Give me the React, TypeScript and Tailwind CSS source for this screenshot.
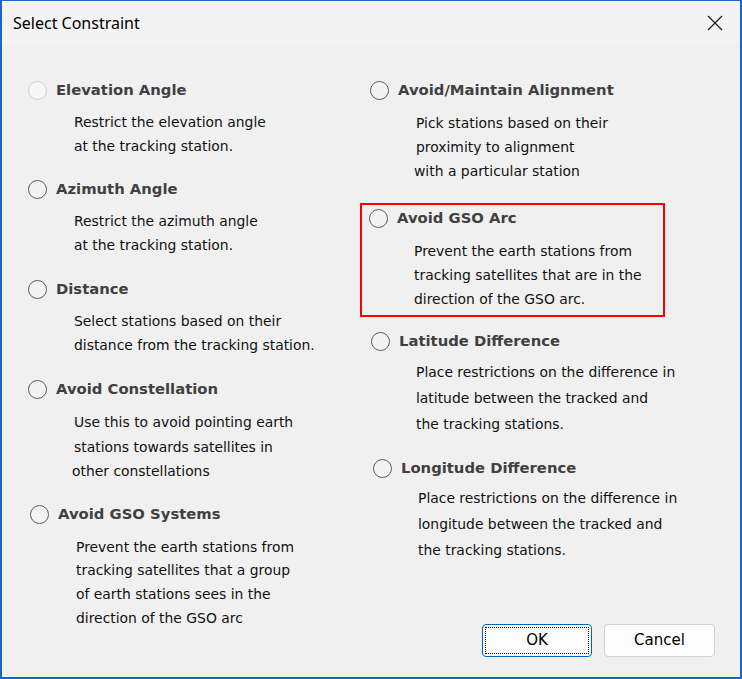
import React from "react";

type Item = {
  label: string;
  lines: { text: string; shift?: string }[];
  wrap: string;
  desc: string;
  disabled?: boolean;
};

const font = { fontFamily: '"DejaVu Sans", Tahoma, sans-serif' };

const leftItems: Item[] = [
  {
    label: "Elevation Angle",
    wrap: "ml-[26px] mt-[36px]",
    desc: "ml-[46px] mt-[10px] leading-[24px]",
    disabled: true,
    lines: [{ text: "Restrict the elevation angle" }, { text: "at the tracking station." }],
  },
  {
    label: "Azimuth Angle",
    wrap: "ml-[26px] mt-[21px]",
    desc: "ml-[46px] mt-[10px] leading-[24px]",
    lines: [{ text: "Restrict the azimuth angle" }, { text: "at the tracking station." }],
  },
  {
    label: "Distance",
    wrap: "ml-[26px] mt-[22px]",
    desc: "ml-[46px] mt-[10px] leading-[24px]",
    lines: [{ text: "Select stations based on their" }, { text: "distance from the tracking station." }],
  },
  {
    label: "Avoid Constellation",
    wrap: "ml-[26px] mt-[22px]",
    desc: "ml-[46px] mt-[11px] leading-[24.5px]",
    lines: [
      { text: "Use this to avoid pointing earth" },
      { text: "stations towards satellites in" },
      { text: "other constellations", shift: "-ml-[2px]" },
    ],
  },
  {
    label: "Avoid GSO Systems",
    wrap: "ml-[28px] mt-[21px]",
    desc: "ml-[46px] mt-[11px] leading-[23.7px]",
    lines: [
      { text: "Prevent the earth stations from" },
      { text: "tracking satellites that a group" },
      { text: "of earth stations sees in the" },
      { text: "direction of the GSO arc" },
    ],
  },
];

function Radio({ disabled }: { disabled?: boolean }) {
  return (
    <span
      className={
        disabled
          ? "w-[19px] h-[19px] shrink-0 rounded-full border border-[#cfcfcf] bg-[#f7f7f7]"
          : "w-[19px] h-[19px] shrink-0 rounded-full border border-[#5c5c5c] bg-[#f3f3f3]"
      }
    />
  );
}

function Option({ item }: { item: Item }) {
  return (
    <div className={item.wrap}>
      <div className="flex items-center h-[20px] gap-[9px]">
        <Radio disabled={item.disabled} />
        <span className="text-[14.8px] font-bold text-[#404040] whitespace-nowrap">{item.label}</span>
      </div>
      <div className={item.desc}>
        {item.lines.map((l, i) => (
          <div key={i} className={`text-[13.9px] text-[#111] whitespace-nowrap ${l.shift ?? ""}`}>
            {l.text}
          </div>
        ))}
      </div>
    </div>
  );
}

export default function App() {
  const alignment: Item = {
    label: "Avoid/Maintain Alignment",
    wrap: "ml-[10px] mt-[36px]",
    desc: "ml-[46px] mt-[11px] leading-[24px]",
    lines: [
      { text: "Pick stations based on their" },
      { text: "proximity to alignment" },
      { text: "with a particular station", shift: "-ml-[2px]" },
    ],
  };
  const gsoArc: Item = {
    label: "Avoid GSO Arc",
    wrap: "ml-[7px] mt-[3px]",
    desc: "ml-[45px] mt-[11px] leading-[24px]",
    lines: [
      { text: "Prevent the earth stations from" },
      { text: "tracking satellites that are in the" },
      { text: "direction of the GSO arc." },
    ],
  };
  const latitude: Item = {
    label: "Latitude Difference",
    wrap: "ml-[11px] mt-[14px]",
    desc: "ml-[45px] mt-[8px] leading-[26px]",
    lines: [
      { text: "Place restrictions on the difference in" },
      { text: "latitude between the tracked and" },
      { text: "the tracking stations." },
    ],
  };
  const longitude: Item = {
    label: "Longitude Difference",
    wrap: "ml-[13px] mt-[21px]",
    desc: "ml-[45px] mt-[7px] leading-[26px]",
    lines: [
      { text: "Place restrictions on the difference in" },
      { text: "longitude between the tracked and" },
      { text: "the tracking stations." },
    ],
  };

  return (
    <div
      className="w-[742px] h-[679px] flex flex-col bg-[#f0f0f0] border-x-2 border-b-2 border-t border-[#1a66c8] overflow-hidden"
      style={font}
    >
      {/* Title bar */}
      <div className="h-[43px] shrink-0 flex items-center justify-between bg-[#f3f3f3] pl-[11px] pr-[17px]">
        <span className="text-[16px] text-black" style={{ fontFamily: '"Noto Sans", "Open Sans", sans-serif' }}>
          Select Constraint
        </span>
        <svg width="16" height="16" viewBox="0 0 16 16" className="mt-[1px]">
          <path d="M1 1 L15 15 M15 1 L1 15" stroke="#1a1a1a" strokeWidth="1.2" />
        </svg>
      </div>

      {/* Body */}
      <div className="flex-1 flex">
        <div className="w-[358px] flex flex-col">
          {leftItems.map((it) => (
            <Option key={it.label} item={it} />
          ))}
        </div>

        <div className="flex-1 flex flex-col">
          <Option item={alignment} />
          <div className="mt-[20px] w-[305px] h-[114px] border-2 border-[#ff0000]">
            <Option item={gsoArc} />
          </div>
          <Option item={latitude} />
          <Option item={longitude} />

          <div className="mt-auto flex justify-end gap-[12px] pr-[25px] pb-[20px]">
            <button className="w-[110px] h-[33px] rounded-[4px] border border-[#0067c0] bg-[#fdfdfd] p-[2px]">
              <span className="flex w-full h-full items-center justify-center border border-dotted border-black text-[15px] text-black">
                OK
              </span>
            </button>
            <button className="w-[111px] h-[33px] rounded-[4px] border border-[#d0d0d0] bg-[#fdfdfd] text-[15px] text-black">
              Cancel
            </button>
          </div>
        </div>
      </div>
    </div>
  );
}
